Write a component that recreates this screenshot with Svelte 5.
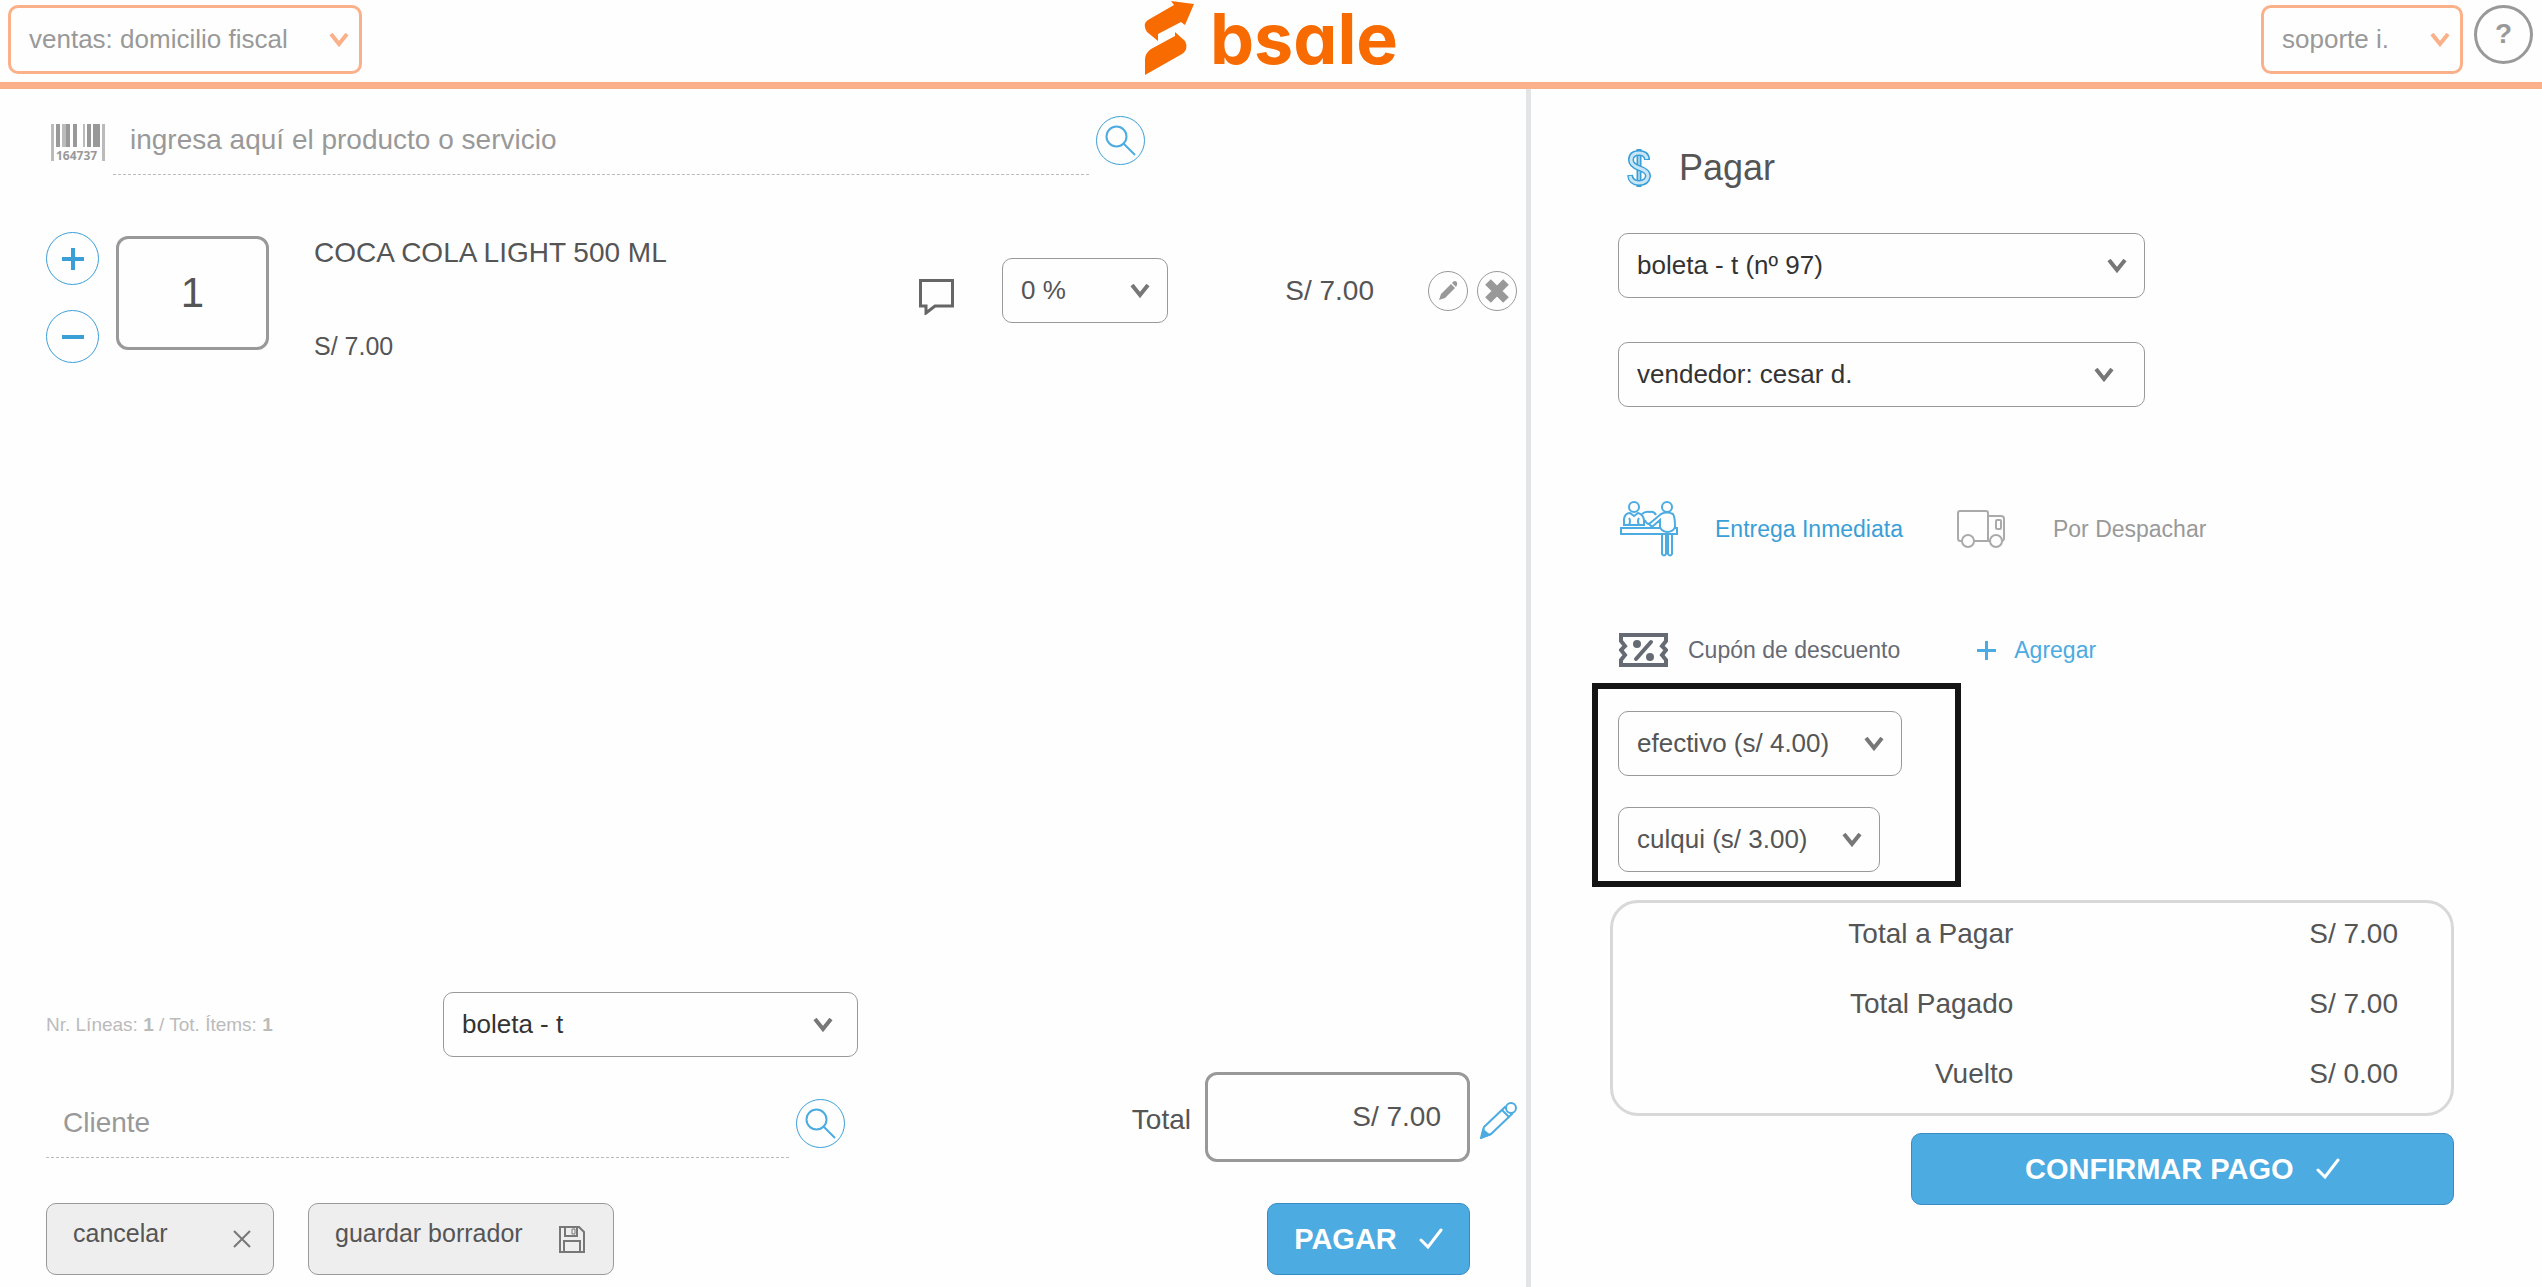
<header class="topbar">
  <div class="picker picker--accent">
    <select aria-label="Sucursal">
      <option>ventas: domicilio fiscal</option>
    </select>
    {@render chevron()}
  </div>
  <a class="logo" href="#inicio">
    <svg width="51" height="76" viewBox="0 0 51 76" aria-hidden="true">
      <path d="M27 1 L50 4 L41 25 L37 22 L14 34 V41 L3 32 Q-2 24 4 20 L30 5Z M31 32 L41 41 Q45 49 38 54 L1 75 V60 Q1 53 7 49 L31 36Z" />
    </svg>
    <span>bsale</span>
  </a>
  <div class="topbar__user">
    <div class="picker picker--accent">
      <select aria-label="Usuario">
        <option>soporte i.</option>
      </select>
      {@render chevron()}
    </div>
    <button class="help" aria-label="Ayuda">?</button>
  </div>
</header>

<main class="pos">
  <section class="sale">
    <div class="search search--product">
      <label for="product" aria-label="Producto">
        <svg class="barcode" width="54" height="40" viewBox="0 0 54 40" aria-hidden="true">
          <path d="M0 0h3v37h-3z M11 0h4v23h-4z M32 0h2v23h-2z M51 0h3v37h-3z" fill="#bbb" />
          <path d="M5 0h4v23h-4z M15 0h4v23h-4z M22 0h4v23h-4z M36 0h4v23h-4z M42 0h7v23h-7z" fill="#999" />
          <text x="5" y="36">164737</text>
        </svg>
      </label>
      <input id="product" type="text" placeholder="ingresa aquí el producto o servicio" />
      <button class="round round--search" aria-label="Buscar producto">{@render lens()}</button>
    </div>

    {#each items as item (item.name)}
      <div class="item">
        <div class="item__stepper">
          <button class="round" aria-label="Sumar" onclick={() => item.qty++}>
            <svg width="22" height="22" viewBox="0 0 22 22"><path d="M11 0v22M0 11h22" stroke-width="4" /></svg>
          </button>
          <button class="round" aria-label="Restar" onclick={() => remove(item)}>
            <svg width="22" height="22" viewBox="0 0 22 22"><path d="M0 11h22" stroke-width="4" /></svg>
          </button>
        </div>
        <input class="item__qty" type="text" aria-label="Cantidad" bind:value={item.qty} />
        <div class="item__info">
          <span class="item__name">{item.name}</span>
          <span class="item__price">{money(item.price)}</span>
        </div>
        <div class="item__side">
          <button class="plain comment" aria-label="Comentario">
            <svg width="35" height="36" viewBox="0 0 35 36" aria-hidden="true">
              <path d="M1.500 1.500H33.500V27H16L7 34V27H1.500Z" fill="none" stroke="#666" stroke-width="3" />
            </svg>
          </button>
          <div class="picker picker--discount">
            <select aria-label="Descuento">
              <option>0 %</option>
            </select>
            {@render chevron()}
          </div>
          <span class="item__total">{money(item.price * item.qty)}</span>
          <div class="item__actions">
            <button class="round round--gray" aria-label="Editar">
              <svg width="22" height="22" viewBox="0 0 22 22" aria-hidden="true">
                <path d="M2 20l2-6L14 4l4 4L8 18z M15 3l2-2q4 0 3 4l-1 2z" fill="#999" />
              </svg>
            </button>
            <button class="round round--gray" aria-label="Eliminar">
              <svg width="24" height="24" viewBox="0 0 24 24" aria-hidden="true">
                <path d="M3 3L21 21M21 3L3 21" stroke="#999" stroke-width="8" />
              </svg>
            </button>
          </div>
        </div>
      </div>
    {/each}

    <footer class="sale__footer">
      <div class="sale__client">
        <div class="summary">
          <p>Nr. Líneas: <b>{items.length}</b> / Tot. Ítems: <b>1</b></p>
          <div class="picker picker--dark picker--document">
            <select aria-label="Documento">
              <option>boleta - t</option>
            </select>
            {@render chevron()}
          </div>
        </div>
        <div class="search search--client">
          <input type="text" aria-label="Cliente" placeholder="Cliente" />
          <button class="round round--search" aria-label="Buscar cliente">{@render lens()}</button>
        </div>
        <div class="drafts">
          <button class="btn btn--cancel">
            <span>cancelar</span>
            <svg width="18" height="18" viewBox="0 0 18 18" aria-hidden="true">
              <path d="M1 1L17 17M17 1L1 17" stroke="#777" stroke-width="2" />
            </svg>
          </button>
          <button class="btn btn--draft">
            <span>guardar borrador</span>
            <svg width="26" height="27" viewBox="0 0 26 27" fill="none" stroke="#777" stroke-width="2" aria-hidden="true">
              <path d="M1 1H20L25 6V26H1Z M6 1V10H18V1 M5 26V15H21V26" />
              <path d="M13 3h3v5h-3z" stroke-width="1" />
            </svg>
          </button>
        </div>
      </div>

      <div class="sale__pay">
        <div class="total">
          <label for="total">Total</label>
          <input id="total" type="text" readonly value={money(total)} />
          <button class="plain" aria-label="Editar total">
            <svg width="37" height="37" viewBox="0 0 37 37" fill="none" stroke="#4cabe0" stroke-width="2" aria-hidden="true">
              <path d="M2 35L4 25L25 5L32 12L11 32Z" />
              <path d="M22 8L29 15" />
              <path d="M1 36L3 28L9 33Z" fill="#4cabe0" />
              <circle cx="31" cy="6" r="5" fill="#fefefe" />
            </svg>
          </button>
        </div>
        <button class="btn-primary btn-primary--pay">PAGAR {@render check()}</button>
      </div>
    </footer>
  </section>

  <section class="checkout">
    <h1>
      <svg width="24" height="40" viewBox="0 0 24 40" fill="none" aria-hidden="true">
        <path d="M12 1V39" stroke="#3a9fd6" stroke-width="5" />
        <path d="M12 3V37" stroke="#fff" stroke-width="1" />
        <path d="M20 12Q20 5 12 5Q4 5 4 12Q4 17 12 20Q21 23 21 28Q20 35 12 35Q4 35 3 27" stroke="#3a9fd6" stroke-width="6" />
        <path d="M20 11Q19 5 12 5Q4 5 4 12Q4 17 12 20Q21 23 21 28Q20 35 12 35Q4 35 3 28" stroke="#c9e6f6" stroke-width="3" />
      </svg>
      Pagar
    </h1>

    <div class="picker picker--dark picker--wide">
      <select aria-label="Tipo de documento">
        <option>boleta - t (nº 97)</option>
      </select>
      {@render chevron()}
    </div>
    <div class="picker picker--dark picker--wide picker--seller">
      <select aria-label="Vendedor">
        <option>vendedor: cesar d.</option>
      </select>
      {@render chevron()}
    </div>

    <div class="delivery">
      <button class="plain delivery__now">
        <svg width="58" height="56" viewBox="0 0 58 56" fill="none" stroke="#4cabe0" stroke-width="2" aria-hidden="true">
          <circle cx="14" cy="6" r="5" />
          <path d="M4 24V18Q5 12 10 12L14 15L18 12Q23 13 24 19V24Z M9 24Q11 20 9 17M19 24Q17 20 19 17" />
          <path d="M22 13Q25 10 30 11Q34 10 36 14M25 19Q26 23 30 23" />
          <circle cx="47" cy="6" r="5" />
          <path d="M41 13Q47 10 53 13Q55 16 55 26Q53 31 47 31Q41 30 40 26V19L32 26L29 23Z" />
          <path d="M40 27H1V33H57V27H55" />
          <path d="M42 33V53Q44 56 46 53V34M48 34V53Q50 56 52 53V33" />
        </svg>
        Entrega Inmediata
      </button>
      <button class="plain delivery__later">
        <svg width="48" height="38" viewBox="0 0 48 38" fill="none" stroke="#aaa" stroke-width="2" aria-hidden="true">
          <path d="M6 31H3Q1 31 1 28V3Q1 1 3 1H29Q31 1 31 3V31H17" />
          <path d="M31 6H44Q47 6 47 9V28Q47 31 44 31M31 31H34" />
          <rect x="39" y="10" width="5" height="9" rx="1" />
          <circle cx="11" cy="31" r="6" />
          <circle cx="39" cy="31" r="6" />
        </svg>
        Por Despachar
      </button>
    </div>

    <div class="coupon">
      <svg width="49" height="34" viewBox="0 0 49 34" fill="none" stroke="#666a73" aria-hidden="true">
        <path d="M2 2H47V8L43 13L47 17L43 22L47 27V32H2V27L6 22L2 17L6 13L2 8Z" stroke-width="4" />
        <path d="M32 9L17 26" stroke-width="4" stroke-linecap="round" />
        <circle cx="18" cy="11" r="4" fill="#666a73" stroke="none" />
        <circle cx="31" cy="24" r="4" fill="#666a73" stroke="none" />
      </svg>
      <span>Cupón de descuento</span>
      <button class="plain coupon__add">
        <svg width="19" height="19" viewBox="0 0 19 19" aria-hidden="true">
          <path d="M9.500 0V19M0 9.500H19" stroke="#4cabe0" stroke-width="3" />
        </svg>
        Agregar
      </button>
    </div>

    <div class="payments">
      {#each payments as payment (payment)}
        <div class="picker">
          <select aria-label="Forma de pago">
            <option>{payment}</option>
          </select>
          {@render chevron()}
        </div>
      {/each}
    </div>

    <dl class="totals">
      {#each totals as row (row.label)}
        <dt>{row.label}</dt>
        <dd>{money(row.amount)}</dd>
      {/each}
    </dl>

    <button class="btn-primary btn-primary--confirm">CONFIRMAR PAGO {@render check()}</button>
  </section>
</main>

{#snippet chevron()}
  <svg class="chevron" width="20" height="14" viewBox="0 0 20 14" aria-hidden="true">
    <path d="M2 1L10 11L18 1" fill="none" stroke="currentColor" stroke-width="4" />
  </svg>
{/snippet}

{#snippet lens()}
  <svg width="31" height="31" viewBox="0 0 31 31" aria-hidden="true">
    <circle cx="11.500" cy="11.500" r="10" stroke-width="2" />
    <path d="M18 18L30 30" stroke-width="2" />
  </svg>
{/snippet}

{#snippet check()}
  <svg width="24" height="22" viewBox="0 0 24 22" aria-hidden="true">
    <path d="M2 12L9 19L22 2" fill="none" stroke="#fff" stroke-width="3" stroke-linecap="round" />
  </svg>
{/snippet}

<script>
  let items = $state([{ name: 'COCA COLA LIGHT 500 ML', price: 7, qty: 1 }]);
  let total = $derived(items.reduce((sum, item) => sum + item.price * item.qty, 0));

  const payments = ['efectivo (s/ 4.00)', 'culqui (s/ 3.00)'];
  const paid = 7;

  let totals = $derived([
    { label: 'Total a Pagar', amount: total },
    { label: 'Total Pagado', amount: paid },
    { label: 'Vuelto', amount: Math.max(paid - total, 0) }
  ]);

  function remove(item) {
    if (item.qty > 1) item.qty--;
  }

  function money(value) {
    return `S/ ${value.toFixed(2)}`;
  }
</script>

<style>
  :global(body) {
    font-family: 'Liberation Sans', Arial, sans-serif;
    font-size: 28px;
    color: #555;
    background: #fefefe;
  }
  button, input, select { font: inherit; color: inherit; margin: 0; box-sizing: border-box; }
  button { cursor: pointer; white-space: nowrap; }
  svg { display: block; flex-shrink: 0; }

  .topbar {
    display: grid;
    grid-template-columns: 1fr auto 1fr;
    align-items: start;
    height: 82px;
    border-bottom: 7px solid #fab088;
  }
  .topbar > .picker { margin: 5px 0 0 8px; justify-self: start; }
  .topbar__user {
    display: flex; gap: 11px;
    justify-self: end;
    padding: 5px 9px 0 0;
  }
  .logo {
    display: flex; gap: 15px;
    color: #f76b00;
    text-decoration: none;
  }
  .logo svg { fill: currentColor; }
  .logo span {
    font-family: Inter, sans-serif;
    font-size: 70px; line-height: 78px; font-weight: 700;
    font-feature-settings: 'cv11';
  }
  .help {
    width: 59px; height: 59px;
    padding: 0 0 2px;
    border: 3px solid #999; border-radius: 50%;
    background: none;
    color: #999; font-weight: 700;
  }

  .picker { display: inline-grid; color: #555; }
  .picker select, .chevron { grid-area: 1 / 1; }
  .picker select {
    appearance: none;
    width: 100%; height: 65px;
    padding: 0 71px 1px 18px;
    border: 1px solid #999; border-radius: 10px;
    background: none;
    font-size: 26px;
  }
  .chevron {
    align-self: center; justify-self: end;
    margin-right: 18px;
    color: #777;
    pointer-events: none;
  }
  .picker--dark { color: #333; }
  .picker--accent { color: #999; }
  .picker--accent select {
    height: 69px;
    border: 3px solid #fab088;
  }
  .picker--accent .chevron { color: #fab088; margin-right: 13px; }
  .picker--discount { width: 166px; }
  .picker--discount select { padding-right: 40px; }
  .picker--wide { width: 63%; }
  .picker--document { width: 415px; }
  .picker--document .chevron { margin-right: 25px; }
  .picker--seller .chevron { margin-right: 31px; }

  .pos {
    display: grid;
    grid-template-columns: 1526fr 1016fr;
    min-height: calc(100vh - 89px);
  }
  .sale {
    display: flex; flex-direction: column;
    box-sizing: border-box;
    padding: 27px 9px 12px 46px;
  }

  .plain {
    display: flex; align-items: center;
    padding: 0;
    border: none;
    background: none;
  }
  .round {
    display: flex; align-items: center; justify-content: center;
    width: 53px; height: 53px;
    padding: 0;
    border: 1px solid #3a9fd6; border-radius: 50%;
    background: none;
    flex-shrink: 0;
  }
  .round svg { fill: none; stroke: #3a9fd6; }
  .round--search { width: 49px; height: 49px; }
  .round--search svg { stroke: #4cabe0; }
  .round--gray { width: 40px; height: 40px; border-color: #999; }
  .round--gray svg { stroke: none; }

  .search { display: flex; align-items: flex-start; }
  .search--product { width: calc(75% - 4px); }
  .search--client { width: 799px; }
  .search label { padding: 8px 8px 0 5px; }
  .search input {
    flex: 1;
    min-width: 0; height: 59px;
    padding: 0 17px 10px;
    border: none; border-bottom: 1px dashed #bbb;
    background: none;
  }
  .search input::placeholder { color: #999; }
  .search button { margin-left: 7px; }
  .barcode { overflow: visible; }
  .barcode text { font: 700 12px 'Open Sans', sans-serif; fill: #999; }

  .item {
    display: flex; align-items: center;
    padding-top: 57px;
  }
  .item__stepper {
    display: flex; flex-direction: column; gap: 25px;
    margin-right: 17px;
  }
  .item__qty, .total input {
    border: 3px solid #999; border-radius: 12px;
    background: none;
  }
  .item__qty {
    width: 153px; height: 114px;
    margin-bottom: 9px;
    font-size: 42px;
    text-align: center;
  }
  .item__info {
    flex: 1;
    align-self: stretch;
    display: flex; flex-direction: column; justify-content: space-between;
    padding-left: 45px;
  }
  .item__name { line-height: 42px; }
  .item__price { font-size: 25px; line-height: 34px; }
  .item__side {
    display: flex; align-items: center;
    padding-bottom: 14px;
  }
  .comment { margin: 12px 48px 0 0; }
  .item__total { width: 206px; text-align: right; }
  .item__actions { display: flex; gap: 9px; margin-left: 54px; }

  .sale__footer {
    display: flex; justify-content: space-between; align-items: flex-end;
    margin-top: auto;
  }
  .sale__client, .sale__pay { display: flex; flex-direction: column; }
  .summary {
    display: flex; align-items: center; justify-content: space-between;
    width: 812px;
    margin-bottom: 42px;
  }
  .summary p {
    margin: 0;
    font-size: 19px;
    color: #bbb;
  }
  .drafts { display: flex; gap: 34px; margin-top: 45px; }
  .btn {
    display: flex; align-items: center; justify-content: space-between;
    height: 72px;
    padding: 0 22px 0 26px;
    border: 1px solid #999; border-radius: 10px;
    background: #eee;
    font-size: 25px;
  }
  .btn span { padding-bottom: 12px; }
  .btn--cancel { width: 228px; }
  .btn--draft { width: 306px; padding-right: 28px; }

  .sale__pay { align-items: flex-end; gap: 41px; }
  .total { display: flex; align-items: center; }
  .total label, .total button { padding-top: 6px; }
  .total input {
    width: 265px; height: 90px;
    margin: 0 10px 0 14px;
    padding: 0 26px;
    text-align: right;
  }
  .btn-primary {
    display: flex; align-items: center; justify-content: center; gap: 22px;
    height: 72px;
    border: 1px solid #3a8bc4; border-radius: 10px;
    background: #4cabe0;
    color: #fff; font-size: 29px; font-weight: 700;
  }
  .btn-primary--pay { width: 203px; margin-right: 47px; }
  .btn-primary--confirm { align-self: flex-end; width: 65%; margin-top: 17px; }

  .checkout {
    display: flex; flex-direction: column; align-items: flex-start;
    border-left: 5px solid #e3e4e6;
    padding: 59px 88px 0 87px;
  }
  h1 {
    display: flex; align-items: center; gap: 28px;
    margin: 0 0 45px 9px;
    font-size: 36px; line-height: 40px; font-weight: 400;
  }
  .picker--wide { margin-bottom: 44px; }
  .delivery {
    display: flex; align-items: center;
    margin: 50px 0 76px 2px;
    font-size: 23px;
  }
  .delivery__now { gap: 37px; margin-right: 54px; color: #3a9fd6; }
  .delivery__later { gap: 48px; color: #999; }
  .coupon {
    display: flex; align-items: center;
    font-size: 23px;
    color: #666a73;
  }
  .coupon svg { margin-left: 1px; }
  .coupon span { margin: 0 76px 0 20px; }
  .coupon__add { gap: 18px; color: #4cabe0; }
  .payments {
    display: flex; flex-direction: column; align-items: flex-start; gap: 31px;
    box-sizing: border-box;
    width: 369px;
    margin: 16px 0 13px -26px;
    padding: 22px 20px 9px;
    border: 6px solid #141414;
  }
  .totals {
    display: grid;
    grid-template-columns: 51% 1fr;
    gap: 30px 0;
    align-self: stretch;
    margin: 0 0 0 -8px;
    padding: 11px 53px 19px 0;
    border: 3px solid #d8d8d8; border-radius: 28px;
    line-height: 40px;
    text-align: right;
  }
  .totals dd { margin: 0; }
</style>
